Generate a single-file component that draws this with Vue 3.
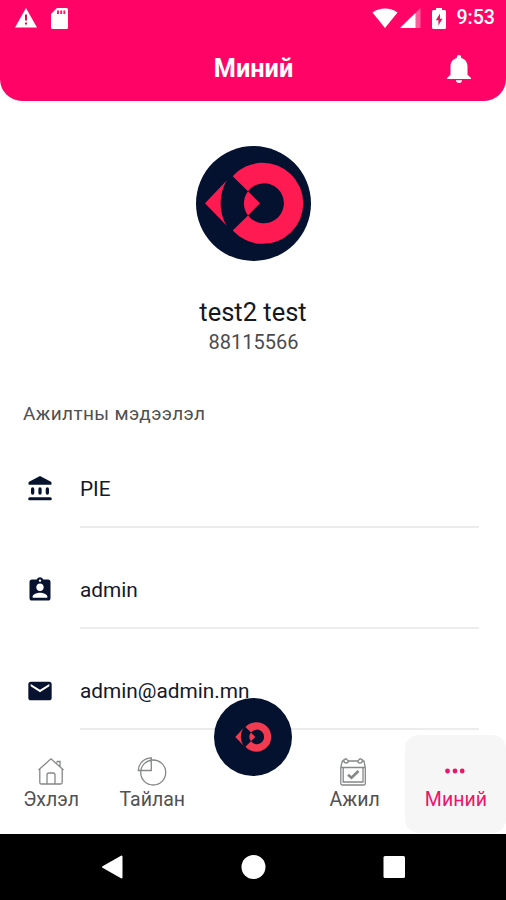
<template>
  <div class="screen">
    <header class="header">
      <div class="status">
        <svg class="warn" width="22" height="20" viewBox="0 0 22 20">
          <path d="M11 0L22 19.5H0Z" fill="#fff" />
          <path d="M10 6.5h2v6h-2zM10 14.5h2v2h-2z" fill="#d3123f" />
        </svg>
        <svg class="sd" width="17" height="21" viewBox="0 0 17 21">
          <path d="M6 0h9.500a1.500 1.500 0 0 1 1.500 1.500v18a1.500 1.500 0 0 1-1.500 1.500h-14a1.500 1.500 0 0 1-1.500-1.500V6Z" fill="#fff" />
          <path d="M6 2.500h2v3.500h-2zM9.200 2.500h2v3.500h-2zM12.400 2.500h2v3.500h-2z" fill="#e8266a" />
        </svg>
        <div class="status-right">
          <svg width="26" height="20" viewBox="0 0 26 20">
            <path d="M0.500 4.500C7.500-1 18.500-1 25.500 4.500L13 20Z" fill="#fff" />
          </svg>
          <svg class="signal" width="21" height="20" viewBox="0 0 21 20">
            <path d="M0 20L20.500 0V20Z" fill="#fff" opacity="0.35" />
            <path d="M0 20L15.500 5V20Z" fill="#fff" />
          </svg>
          <svg class="battery" width="14" height="21" viewBox="0 0 14 21">
            <path d="M4 0h6v2h2.500a1.500 1.500 0 0 1 1.500 1.500v16a1.500 1.500 0 0 1-1.500 1.500h-11a1.500 1.500 0 0 1-1.500-1.500v-16a1.500 1.500 0 0 1 1.500-1.500h2.500Z" fill="#fff" />
            <path d="M8 5.500L3.800 12.300h2.600V17.500L10.500 10.700H8Z" fill="#e0195c" />
          </svg>
          <span class="time">9:53</span>
        </div>
      </div>
      <div class="title-bar">
        <h1 class="title">Миний</h1>
        <svg class="bell" width="24" height="28" viewBox="0 0 24 28">
          <path d="M12 0a2.200 2.200 0 0 1 2.200 2.200v.8c4 1 6.300 4.300 6.300 8.700v8L24 23v1H0v-1l3.500-3.300v-8c0-4.400 2.300-7.700 6.300-8.700v-.8A2.200 2.200 0 0 1 12 0ZM9 25.300h6a3 2.700 0 0 1-6 0Z" fill="#fff" />
        </svg>
      </div>
    </header>

    <main class="content">
      <div class="avatar">
        <svg width="115" height="115" viewBox="0 0 115 115" fill="#ff1b51">
          <path v-for="d in logo" :key="d" :d="d" />
        </svg>
      </div>
      <div class="name">test2 test</div>
      <div class="phone">88115566</div>

      <h2 class="section-title">Ажилтны мэдээлэл</h2>

      <div v-for="item in info" :key="item.text" class="row">
        <svg class="row-icon" width="28" height="28" viewBox="0 0 24 24">
          <path :d="item.icon" fill="#07122f" />
        </svg>
        <div class="row-text">{{ item.text }}</div>
      </div>
    </main>

    <nav class="tabs">
      <div
        v-for="(tab, i) in tabs"
        :key="i"
        class="tab"
        :class="{ active: tab.active }"
      >
        <template v-if="tab.label">
          <svg class="tab-icon" width="30" height="30" viewBox="0 0 30 30">
            <path :d="tab.icon" />
            <path v-if="tab.mark" :d="tab.mark" class="mark" />
          </svg>
          <span class="tab-label">{{ tab.label }}</span>
        </template>
      </div>
      <button class="fab">
        <svg width="42" height="42" viewBox="0 0 115 115" fill="#f23b51">
          <path v-for="d in logo" :key="d" :d="d" />
        </svg>
      </button>
    </nav>

    <div class="system-nav">
      <svg width="26" height="26" viewBox="0 0 26 26">
        <path d="M22.500 2.500v21L4 13Z" fill="#fff" stroke="#fff" stroke-width="2" stroke-linejoin="round" />
      </svg>
      <svg width="26" height="26" viewBox="0 0 26 26">
        <circle cx="13.500" cy="13" r="12" fill="#fff" />
      </svg>
      <svg width="26" height="26" viewBox="0 0 26 26">
        <rect x="2.500" y="2" width="21.500" height="22" rx="1.500" fill="#fff" />
      </svg>
    </div>
  </div>
</template>

<script setup>
const logo = [
  'M36.7 30.2A40.5 40.5 0 1 1 36.7 84.5L52 69.4A20 20 0 1 0 52 45.2Z',
  'M52 45.2L64 57.3L52 69.4A20 20 0 0 1 52 45.2Z',
  'M9 57.3L30.7 34.5A45 45 0 0 0 30.7 79.8Z'
]

const info = [
  {
    text: 'PIE',
    icon: 'M5.700 10.500a1.400 1.400 0 0 1 1.400 1.400v3.600a1.400 1.400 0 0 1-2.800 0v-3.600a1.400 1.400 0 0 1 1.400-1.400zm6.300 0a1.400 1.400 0 0 1 1.400 1.400v3.600a1.400 1.400 0 0 1-2.800 0v-3.600a1.400 1.400 0 0 1 1.400-1.400zm6.300 0a1.400 1.400 0 0 1 1.400 1.400v3.600a1.400 1.400 0 0 1-2.800 0v-3.600a1.400 1.400 0 0 1 1.400-1.400zM3.200 19h17.600a1.300 1.300 0 0 1 0 2.700H3.200a1.300 1.300 0 0 1 0-2.700zM12 .8L2.200 6v2.300h19.600V6z'
  },
  {
    text: 'admin',
    icon: 'M19 3h-4.180C14.400 1.840 13.300 1 12 1c-1.300 0-2.400.840-2.820 2H5c-1.100 0-2 .900-2 2v14c0 1.100.900 2 2 2h14c1.100 0 2-.900 2-2V5c0-1.100-.900-2-2-2zm-7 0c.550 0 1 .450 1 1s-.450 1-1 1-1-.450-1-1 .450-1 1-1zm0 3.400c1.800 0 3.200 1.400 3.200 3.200s-1.400 3.200-3.200 3.200-3.200-1.400-3.200-3.200 1.400-3.200 3.200-3.200zm6.300 12.300H5.700v-1.100c0-2.200 4.200-3.300 6.300-3.300s6.300 1.100 6.300 3.300z'
  },
  {
    text: 'admin@admin.mn',
    icon: 'M20 4H4c-1.100 0-1.990.900-1.990 2L2 18c0 1.100.900 2 2 2h16c1.100 0 2-.900 2-2V6c0-1.100-.900-2-2-2zm0 4l-8 5-8-5V6l8 5 8-5v2z'
  }
]

const tabs = [
  {
    label: 'Эхлэл',
    icon: 'M2.500 13L15 1.800L27.500 13M3.800 12V25.500a1.500 1.500 0 0 0 1.500 1.500h19.400a1.500 1.500 0 0 0 1.500-1.500V12M11 27V18a2 2 0 0 1 2-2h4a2 2 0 0 1 2 2v9M20.500 5.500l1-1h2.500v5'
  },
  {
    label: 'Тайлан',
    icon: 'M3.700 15.500a12.500 12.500 0 1 0 25 0a12.500 12.500 0 1 0-25 0M14.300 .8A13 13 0 0 0 1.300 13.500H14.300Z'
  },
  { label: '' },
  {
    label: 'Ажил',
    icon: 'M3.300 4H5a2.200 2 0 0 0 4.400 0H18.800a2.200 2 0 0 0 4.400 0H24.900L26.300 10.500V26.500a1.500 1.500 0 0 1-1.500 1.500H3.300A1.500 1.500 0 0 1 1.800 26.500V10.500ZM5 4V2.500L7 1.800L9.400 4M18.800 4L21 1.800L23.200 2.500V4M2 10.500H26M4.200 11V25H24V11',
    mark: 'M9 17.800L12.500 20.700L19.500 14'
  },
  {
    label: 'Миний',
    icon: 'M7.500 14h.01M15 14h.01M22.200 14h.01',
    active: true
  }
]
</script>

<style>
body {
  margin: 0;
  background: #fff;
}
</style>

<style scoped>
.screen {
  height: 900px;
  display: flex;
  flex-direction: column;
  overflow: hidden;
  background: #fff;
  font-family: Roboto, 'Liberation Sans', sans-serif;
}

.header {
  height: 101px;
  box-sizing: border-box;
  padding-top: 7px;
  border-radius: 0 0 22px 22px;
  background: #ff0466;
  color: #fff;
}

.status {
  height: 22px;
  display: flex;
  align-items: center;
  padding: 0 11px 0 15px;
}

.sd {
  margin-left: 14px;
}

.status-right {
  display: flex;
  align-items: center;
  margin-left: auto;
}

.signal {
  margin-left: 2px;
}

.battery {
  margin: 0 10px 0 11px;
}

.time {
  font-size: 19.6px;
  font-weight: 500;
  line-height: 22px;
}

.title-bar {
  display: grid;
  grid-template-columns: 1fr auto 1fr;
  align-items: center;
  height: 79px;
  padding-right: 35px;
  padding-left: 36px;
}

.title {
  grid-column: 2;
  margin: 0;
  font-size: 25.3px;
  font-weight: 700;
}

.bell {
  justify-self: end;
}

.content {
  height: 634px;
  flex: none;
}

.avatar {
  width: 115px;
  height: 115px;
  margin: 45px auto 0;
  border-radius: 50%;
  background: #041230;
}

.name {
  margin-top: 35px;
  font-size: 25.5px;
  line-height: 32px;
  text-align: center;
  color: #15171f;
}

.phone {
  margin-top: 2px;
  padding-left: 1px;
  font-size: 20px;
  line-height: 24px;
  text-align: center;
  color: #4b4b4f;
}

.section-title {
  margin: 47px 0 0 23px;
  font-size: 19px;
  font-weight: 400;
  line-height: 26px;
  letter-spacing: 0.37px;
  color: #505050;
}

.row {
  height: 101px;
  display: flex;
}

.row-icon {
  flex: none;
  margin: 48px 26px 0 26px;
}

.row-text {
  flex: 1;
  height: 101px;
  margin-right: 27px;
  padding-top: 23px;
  box-sizing: border-box;
  border-bottom: 2px solid #ececec;
  font-size: 20.8px;
  line-height: 78px;
  color: #15182a;
}

.tabs {
  position: relative;
  height: 99px;
  flex: none;
  display: grid;
  grid-template-columns: repeat(5, 1fr);
  background: #fff;
}

.tab {
  display: flex;
  flex-direction: column;
  align-items: center;
  height: 98px;
  box-sizing: border-box;
  padding-top: 22px;
  color: #505254;
}

.tab-icon {
  fill: none;
  stroke: #858789;
  stroke-width: 1.3;
}

.mark {
  stroke-width: 2.6;
}

.tab-label {
  padding-left: 1px;
  font-size: 19.5px;
  line-height: 25px;
}

.tab.active {
  border-radius: 14px;
  background: #f6f6f6;
  color: #ef1468;
}

.tab.active .tab-icon {
  stroke: #ef1468;
  stroke-width: 4.8;
  stroke-linecap: round;
}

.fab {
  position: absolute;
  top: -37px;
  left: 50%;
  width: 78px;
  height: 78px;
  transform: translateX(-50%);
  display: flex;
  align-items: center;
  justify-content: center;
  padding: 0;
  border: none;
  border-radius: 50%;
  background: #041230;
}

.system-nav {
  height: 66px;
  flex: none;
  display: flex;
  align-items: center;
  justify-content: center;
  gap: 115px;
  background: #000;
}
</style>
